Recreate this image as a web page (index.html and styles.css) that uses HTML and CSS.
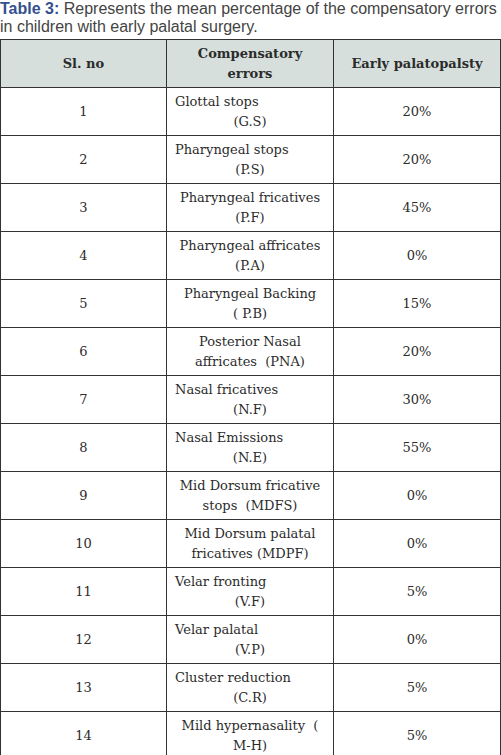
FILE: index.html
```html
<!DOCTYPE html>
<html>
<head>
    <title>Table 3</title>
    <link rel="stylesheet" href="styles.css">
</head>
<body>
    <p class="caption"><b>Table 3:</b> Represents the mean percentage of the compensatory errors in children with early palatal surgery.</p>
    <table class="data">
        <colgroup>
            <col class="c1">
            <col class="c2">
            <col class="c3">
        </colgroup>
        <thead>
            <tr>
                <th>Sl. no</th>
                <th>Compensatory<br>errors</th>
                <th>Early palatopalsty</th>
            </tr>
        </thead>
        <tbody>
            <tr>
                <td>1</td>
                <td class="name"><div class="l">Glottal stops</div><div>(G.S)</div></td>
                <td>20%</td>
            </tr>
            <tr>
                <td>2</td>
                <td class="name"><div class="l">Pharyngeal stops</div><div>(P.S)</div></td>
                <td>20%</td>
            </tr>
            <tr>
                <td>3</td>
                <td class="name">Pharyngeal fricatives<br>(P.F)</td>
                <td>45%</td>
            </tr>
            <tr>
                <td>4</td>
                <td class="name">Pharyngeal affricates<br>(P.A)</td>
                <td>0%</td>
            </tr>
            <tr>
                <td>5</td>
                <td class="name">Pharyngeal Backing<br>( P.B)</td>
                <td>15%</td>
            </tr>
            <tr>
                <td>6</td>
                <td class="name">Posterior Nasal<br>affricates&nbsp; (PNA)</td>
                <td>20%</td>
            </tr>
            <tr>
                <td>7</td>
                <td class="name"><div class="l">Nasal fricatives</div><div>(N.F)</div></td>
                <td>30%</td>
            </tr>
            <tr>
                <td>8</td>
                <td class="name"><div class="l">Nasal Emissions</div><div>(N.E)</div></td>
                <td>55%</td>
            </tr>
            <tr>
                <td>9</td>
                <td class="name">Mid Dorsum fricative<br>stops&nbsp; (MDFS)</td>
                <td>0%</td>
            </tr>
            <tr>
                <td>10</td>
                <td class="name">Mid Dorsum palatal<br>fricatives (MDPF)</td>
                <td>0%</td>
            </tr>
            <tr>
                <td>11</td>
                <td class="name"><div class="l">Velar fronting</div><div>(V.F)</div></td>
                <td>5%</td>
            </tr>
            <tr>
                <td>12</td>
                <td class="name"><div class="l">Velar palatal</div><div>(V.P)</div></td>
                <td>0%</td>
            </tr>
            <tr>
                <td>13</td>
                <td class="name"><div class="l">Cluster reduction</div><div>(C.R)</div></td>
                <td>5%</td>
            </tr>
            <tr>
                <td>14</td>
                <td class="name">Mild hypernasality&nbsp; (<br>M-H)</td>
                <td>5%</td>
            </tr>
        </tbody>
    </table>
</body>
</html>
```

FILE: styles.css
```css
body {
    margin: 0;
    background-color: #fff;
    width: 501px;
}
.caption {
    margin: 0 0 3px;
    font-family: "Liberation Sans", Arial, sans-serif;
    font-size: 16px;
    line-height: 18px;
    color: #444;
}
.caption b {
    color: #34508f;
}
.data {
    width: 501px;
    table-layout: fixed;
    border-collapse: collapse;
    font-family: "DejaVu Serif", serif;
    font-size: 13px;
    color: #2b2b2b;
}
.c1 {
    width: 166px;
}
.c2 {
    width: 167px;
}
.data th,
.data td {
    border: 1px solid #333;
    height: 47px;
    padding: 0 8px;
    text-align: center;
    vertical-align: middle;
    line-height: 20px;
}
.data th {
    background-color: #d6dfdc;
    font-size: 13px;
    font-weight: bold;
}
.data .name .l {
    text-align: left;
}
```
